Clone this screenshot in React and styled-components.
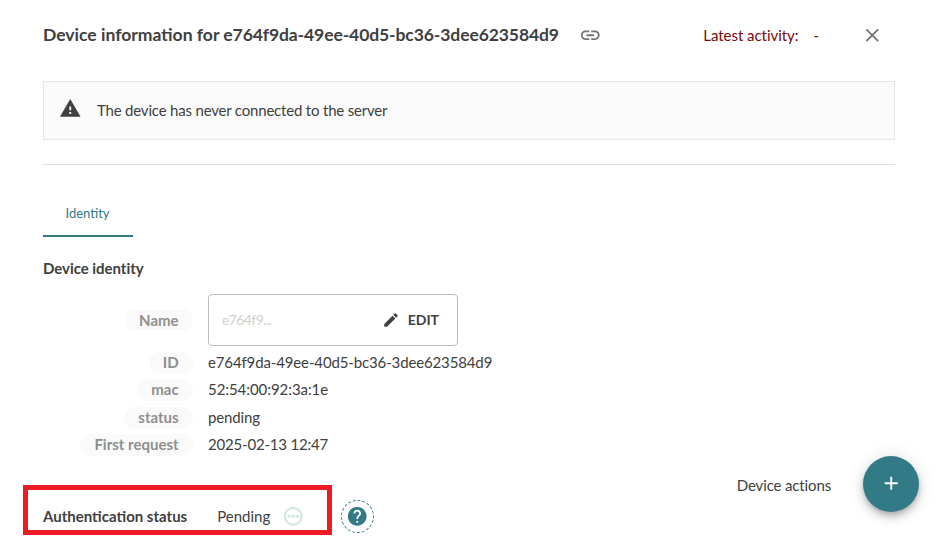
import React from "react";
import styled, { createGlobalStyle } from "styled-components";
import {
  MdAdd,
  MdClose,
  MdEdit,
  MdHelp,
  MdLink,
  MdWarning,
} from "react-icons/md";

const teal = "#337a87";

const GlobalStyle = createGlobalStyle`
  * { box-sizing: border-box; }
  body {
    margin: 0;
    background: #fff;
    color: #404041;
    font-family: Lato, sans-serif;
    font-size: 15px;
    overflow: hidden;
  }
`;

const Drawer = styled.main`
  position: relative;
  display: flex;
  flex-direction: column;
  width: 947px;
  height: 537px;
  padding: 11px 52px 0 43px;
  overflow: hidden;
`;

const Header = styled.header`
  display: flex;
  align-items: center;
  height: 48px;
  flex: none;
  padding-right: 12px;
`;

const Title = styled.h3`
  margin: 0;
  padding-bottom: 2px;
  font-size: 17.55px;
  font-weight: 700;
  white-space: nowrap;
`;

const DeviceId = styled.span`
  letter-spacing: -0.11px;
`;

const IconButton = styled.button`
  display: flex;
  padding: 0;
  border: 0;
  background: none;
  color: #757575;
  font-size: 22.5px;
  margin-left: ${(p) => p.$gap}px;
`;

const Activity = styled.div`
  display: flex;
  gap: 15px;
  margin-left: auto;
  color: #7a0a0a;
  letter-spacing: -0.04px;
`;

const Alert = styled.div`
  display: flex;
  align-items: center;
  flex: none;
  height: 59px;
  margin-top: 22px;
  padding: 0 0 2px 15px;
  border: 1px solid #e6e6e6;
  background: #fbfbfb;
  letter-spacing: -0.19px;

  svg {
    font-size: 22.5px;
    margin: -3px 15.5px 0 0;
  }
`;

const Divider = styled.hr`
  width: 100%;
  margin: 24px 0 0;
  border: 0;
  border-top: 1px solid #dfdfdf;
`;

const Tab = styled.div`
  display: flex;
  align-items: center;
  justify-content: center;
  flex: none;
  width: 90px;
  height: 45px;
  margin-top: 27px;
  padding: 0 1px 2px 0;
  border-bottom: 2px solid ${teal};
  color: ${teal};
  font-size: 13px;
`;

const SectionTitle = styled.h4`
  margin: 0;
  font-size: 15px;
  line-height: 20px;
  font-weight: 700;
`;

const IdentitySection = styled.section`
  padding-top: 21px;
  letter-spacing: -0.04px;
`;

const Details = styled.dl`
  display: grid;
  grid-template-columns: 150px 1fr;
  grid-template-rows: 52px 33px 22px 34px 20px;
  column-gap: 15px;
  align-items: center;
  margin: 16px 0 0;
  letter-spacing: 0;
`;

const Label = styled.dt`
  justify-self: end;
  height: 22px;
  padding: 0 14.4px 0 14px;
  border-radius: 11px;
  background: #fafafa;
  color: #8f8f8f;
  font-weight: 700;
  line-height: ${(p) => (p.$field ? 22 : 20)}px;
`;

const Value = styled.dd`
  margin: 0;
  line-height: 20px;
  padding-bottom: ${(p) => (p.$field ? 0 : 2)}px;
  letter-spacing: ${(p) => p.$tracking || 0}px;
`;

const NameField = styled.div`
  display: flex;
  align-items: center;
  justify-content: space-between;
  width: 250px;
  height: 52px;
  padding: 0 18px 0 13px;
  border: 1px solid #bbb;
  border-radius: 4px;
`;

const Placeholder = styled.span`
  color: #cfcfcf;
  font-size: 14px;
  letter-spacing: -0.6px;
`;

const EditButton = styled.button`
  display: flex;
  align-items: center;
  gap: 8px;
  padding: 0;
  border: 0;
  background: none;
  color: #404041;
  font: 700 14px/18px Lato, sans-serif;

  svg {
    font-size: 18px;
  }
`;

const StatusRow = styled.section`
  display: flex;
  align-items: center;
  height: 34px;
  margin-top: 44px;
`;

const StatusValue = styled.div`
  display: flex;
  align-items: center;
  gap: 12px;
  margin-left: 30px;
`;

const PendingSvg = styled.svg`
  width: 22.5px;
  height: 22.5px;
  fill: #d3e7e3;
`;

const HelpButton = styled.button`
  display: flex;
  align-items: center;
  justify-content: center;
  width: 33px;
  height: 33px;
  margin-left: 36px;
  padding: 0;
  border: 1px dashed ${teal};
  border-radius: 50%;
  background: #fff;
  color: ${teal};
  font-size: 22.5px;
`;

const Highlight = styled.div`
  position: absolute;
  left: 23px;
  top: 485px;
  width: 309px;
  height: 50px;
  border: 5px solid #ed1c24;
`;

const Actions = styled.div`
  position: absolute;
  right: 28px;
  top: 456px;
  display: flex;
  align-items: center;
  gap: 32px;
`;

const ActionsLabel = styled.span`
  padding-top: 2px;
  letter-spacing: -0.14px;
`;

const Fab = styled.button`
  display: flex;
  align-items: center;
  justify-content: center;
  width: 56px;
  height: 56px;
  padding: 0 0 1px;
  border: 0;
  border-radius: 50%;
  background: ${teal};
  color: #fff;
  font-size: 22.5px;
  box-shadow:
    0 3px 5px -1px rgba(0, 0, 0, 0.2),
    0 6px 10px rgba(0, 0, 0, 0.14),
    0 1px 18px rgba(0, 0, 0, 0.12);
`;

const PendingIcon = () => (
  <PendingSvg viewBox="0 0 24 24" aria-hidden="true">
    <circle cx="12" cy="12" r="8.9" fill="none" stroke="#d3e7e3" strokeWidth="2.3" />
    <circle cx="7.5" cy="12" r="1.75" />
    <circle cx="12" cy="12" r="1.75" />
    <circle cx="16.5" cy="12" r="1.75" />
  </PendingSvg>
);

const details = [
  { label: "ID", value: "e764f9da-49ee-40d5-bc36-3dee623584d9", tracking: -0.135 },
  { label: "mac", value: "52:54:00:92:3a:1e", tracking: -0.06 },
  { label: "status", value: "pending", tracking: -0.12 },
  { label: "First request", value: "2025-02-13 12:47", tracking: -0.19 },
];

export default function App() {
  return (
    <Drawer>
      <GlobalStyle />
      <Header>
        <Title>
          Device information for <DeviceId>e764f9da-49ee-40d5-bc36-3dee623584d9</DeviceId>
        </Title>
        <IconButton $gap={20} aria-label="Copy link">
          <MdLink />
        </IconButton>
        <Activity>
          <span>Latest activity:</span>
          <span>-</span>
        </Activity>
        <IconButton $gap={41.5} aria-label="Close">
          <MdClose />
        </IconButton>
      </Header>
      <Alert>
        <MdWarning />
        The device has never connected to the server
      </Alert>
      <Divider />
      <Tab>Identity</Tab>
      <IdentitySection>
        <SectionTitle>Device identity</SectionTitle>
        <Details>
          <Label $field>Name</Label>
          <Value $field>
            <NameField>
              <Placeholder>e764f9...</Placeholder>
              <EditButton>
                <MdEdit />
                EDIT
              </EditButton>
            </NameField>
          </Value>
          {details.map(({ label, value, tracking }) => (
            <React.Fragment key={label}>
              <Label>{label}</Label>
              <Value $tracking={tracking}>{value}</Value>
            </React.Fragment>
          ))}
        </Details>
      </IdentitySection>
      <StatusRow>
        <SectionTitle>Authentication status</SectionTitle>
        <StatusValue>
          Pending
          <PendingIcon />
        </StatusValue>
        <HelpButton aria-label="Help">
          <MdHelp />
        </HelpButton>
      </StatusRow>
      <Highlight />
      <Actions>
        <ActionsLabel>Device actions</ActionsLabel>
        <Fab aria-label="Device actions">
          <MdAdd />
        </Fab>
      </Actions>
    </Drawer>
  );
}
